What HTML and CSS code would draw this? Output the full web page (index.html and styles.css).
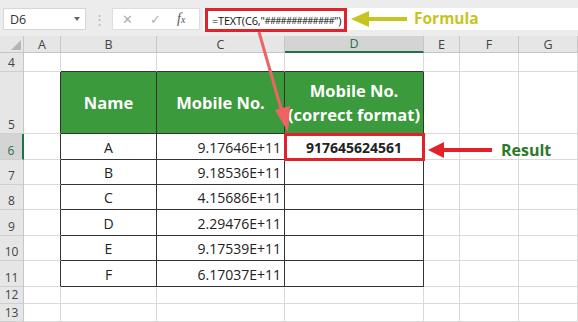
FILE: index.html
```html
<!DOCTYPE html>
<html>
<head>
<meta charset="utf-8">
<link rel="stylesheet" href="styles.css">
</head>
<body>
<div class="topbar">
  <div class="namebox"><span>D6</span><span class="caret"></span></div>
  <div class="grip">⋮</div>
  <div class="fxbtns">
    <span class="btn x">✕</span>
    <span class="btn ok">✓</span>
    <span class="btn fx"><i>f</i><i class="sx">x</i></span>
  </div>
  <div class="fbar">
    <span class="fbox">=TEXT(C6,"<span class="hash">#############</span>")</span>
    <svg class="yarrow" width="58" height="20" viewBox="0 0 58 20"><polygon points="0,10 18,2 18,8 56,8 56,12 18,12 18,18" fill="#c8c41f"/></svg>
    <span class="flabel">Formula</span>
  </div>
</div>
<table class="sheet">
  <colgroup>
    <col style="width:24px"><col style="width:37px"><col style="width:96px"><col style="width:128px"><col style="width:139px"><col style="width:36px"><col style="width:59px"><col style="width:59px">
  </colgroup>
  <tr class="hdr">
    <th class="corner"><span class="tri"></span></th><th>A</th><th>B</th><th>C</th><th class="selcol">D</th><th>E</th><th>F</th><th>G</th>
  </tr>
  <tr class="r4"><th class="rh">4</th><td></td><td class="dt"></td><td class="dt"></td><td class="dt"></td><td></td><td></td><td></td></tr>
  <tr class="r5"><th class="rh">5</th><td class="dl"></td><td class="d g">Name</td><td class="d g">Mobile No.</td><td class="d g">Mobile No.<br>(correct format)</td><td></td><td></td><td></td></tr>
  <tr class="r6"><th class="rh selrow">6</th><td class="dl"></td><td class="d c">A</td><td class="d n">9.17646E+11</td><td class="d c b sel">917645624561</td><td></td><td></td><td></td></tr>
  <tr class="r7"><th class="rh">7</th><td class="dl"></td><td class="d c">B</td><td class="d n">9.18536E+11</td><td class="d"></td><td></td><td></td><td></td></tr>
  <tr class="r8"><th class="rh">8</th><td class="dl"></td><td class="d c">C</td><td class="d n">4.15686E+11</td><td class="d"></td><td></td><td></td><td></td></tr>
  <tr class="r9"><th class="rh">9</th><td class="dl"></td><td class="d c">D</td><td class="d n">2.29476E+11</td><td class="d"></td><td></td><td></td><td></td></tr>
  <tr class="r10"><th class="rh">10</th><td class="dl"></td><td class="d c">E</td><td class="d n">9.17539E+11</td><td class="d"></td><td></td><td></td><td></td></tr>
  <tr class="r11"><th class="rh">11</th><td class="dl"></td><td class="d c">F</td><td class="d n">6.17037E+11</td><td class="d"></td><td></td><td></td><td></td></tr>
  <tr class="r12"><th class="rh">12</th><td></td><td></td><td></td><td></td><td></td><td></td><td></td></tr>
  <tr class="r13"><th class="rh">13</th><td></td><td></td><td></td><td></td><td></td><td></td><td></td></tr>
</table>
<svg class="parrow" width="578" height="322" viewBox="0 0 578 322">
  <line x1="259" y1="32" x2="282" y2="112" stroke="#ee6464" stroke-width="3"/>
  <polygon points="288,132 275,110 290,106" fill="#ee6464"/>
</svg>
<div class="result">
  <svg width="66" height="18" viewBox="0 0 66 18"><polygon points="0,9 16,1 16,7 64,7 64,11 16,11 16,17" fill="#e4202a"/></svg>
  <span class="rlabel">Result</span>
</div>
</body>
</html>
```
FILE: styles.css
```css
body{margin:0;width:578px;height:322px;overflow:hidden;background:#fff;font-family:"Open Sans",sans-serif;position:relative}
.topbar{height:36px;background:#ececec;display:flex;align-items:flex-start;padding-top:8px;box-sizing:border-box}
.namebox{margin-left:3px;width:83px;height:22px;background:#fff;border:1px solid #d6d6d6;box-sizing:border-box;display:flex;align-items:center;justify-content:space-between;padding:0 5px 0 6px;font-size:12.5px;color:#333}
.caret{width:0;height:0;border-left:3px solid transparent;border-right:3px solid transparent;border-top:4px solid #666}
.grip{width:26px;height:22px;text-align:center;color:#b8b8b8;font-size:13px;line-height:22px}
.fxbtns{width:88px;height:22px;background:#fff;border:1px solid #dedede;box-sizing:border-box;display:flex;align-items:center;position:relative}
.btn{position:absolute;top:2px;font-size:13px;color:#b0b0b0;line-height:16px}
.x{left:9px}
.ok{left:37px}
.fx{left:64px;color:#555;font-family:"Liberation Serif",serif;font-size:14px}
.fx .sx{font-size:10px}
.fbar{flex:1;margin-left:3px;height:22px;background:#fff;display:flex;align-items:flex-start}
.fbox{margin-left:2px;width:142px;height:24px;border:3px solid #e2222a;box-sizing:border-box;font-size:11px;display:flex;align-items:center;padding-left:4px;color:#111;white-space:nowrap;background:#fff;letter-spacing:-0.2px}
.hash{font-size:9.5px;letter-spacing:-0.8px}
.yarrow{margin:1px 0 0 4px}
.flabel{margin-left:5px;font-weight:700;font-size:15.5px;color:#c8c41f;line-height:21px}
.sheet{border-collapse:separate;border-spacing:0;table-layout:fixed;width:578px}
.sheet td,.sheet th{padding:0;box-sizing:border-box;border-right:1px solid #dadada;border-bottom:1px solid #dadada;overflow:hidden;white-space:nowrap;vertical-align:bottom}
.hdr th{height:17px;background:#e6e6e6;font-weight:400;font-size:12.5px;color:#444;text-align:center;border-right:1px solid #c6c6c6;border-bottom:1px solid #c6c6c6;line-height:15px;vertical-align:middle}
.hdr th.selcol{background:#d4d4d4;border-bottom:2px solid #217346;color:#217346}
.corner{position:relative}
.tri{position:absolute;right:2px;bottom:2px;width:0;height:0;border-left:10px solid transparent;border-bottom:10px solid #b4b4b4}
.rh{background:#e6e6e6;font-weight:400;font-size:12px;color:#444;text-align:center;border-right:1px solid #c6c6c6 !important;border-bottom:1px solid #cfcfcf !important;line-height:14px;padding-bottom:1px !important}
.rh.selrow{background:#d4d4d4;border-right:2px solid #217346 !important;color:#217346}
.r4 td,.r4 th{height:19px}
.r5 td,.r5 th{height:62px}
.r6 td,.r6 th{height:26px}
.r7 td,.r7 th{height:25px}
.r8 td,.r8 th{height:25px}
.r9 td,.r9 th{height:26px}
.r10 td,.r10 th{height:25px}
.r11 td,.r11 th{height:26px}
.r12 td,.r12 th{height:17px}
.r13 td,.r13 th{height:18px}
.sheet td.d{border-right:1px solid #333;border-bottom:1px solid #333;font-size:14px;color:#222;line-height:18px;padding-bottom:2px}
.sheet td.dl{border-right:1px solid #333}
.sheet td.dt{border-bottom:1px solid #333}
.sheet td.g{background:#3a9a3c;color:#fff;font-weight:700;font-size:16.5px;text-align:center;vertical-align:middle;line-height:24px;padding-bottom:0}
.c{text-align:center}
.n{text-align:right;padding-right:3px !important}
.b{font-weight:700;color:#111}
.sheet td.sel{outline:3px solid #e2222a;outline-offset:-2px}
.parrow{position:absolute;left:0;top:0;pointer-events:none}
.result{position:absolute;left:428px;top:139px;display:flex;align-items:center}
.rlabel{margin-left:7px;font-weight:700;font-size:16px;color:#2a7a28}
```
